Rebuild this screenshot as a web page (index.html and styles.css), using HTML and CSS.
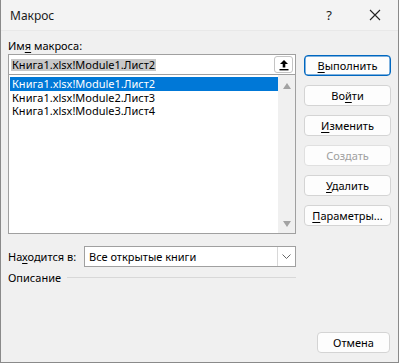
FILE: index.html
```html
<!DOCTYPE html>
<html lang="ru">
<head>
    <meta charset="UTF-8">
    <title>Макрос</title>
    <link rel="stylesheet" href="styles.css">
</head>
<body>
<div class="window">
    <div class="titlebar">
        <span class="title">Макрос</span>
        <span class="help">?</span>
        <span class="close">
            <svg width="12" height="12" viewBox="0 0 12 12"><path d="M1 1 L11 11 M11 1 L1 11" stroke="#222" stroke-width="1.1" fill="none"/></svg>
        </span>
    </div>
    <div class="body">
        <div class="main">
            <div class="left">
                <div class="label">Им<u>я</u> макроса:</div>
                <div class="name-box">
                    <span class="name-sel">Книга1.xlsx!Module1.Лист2</span>
                    <span class="pick">
                        <svg width="10" height="12" viewBox="0 0 10 12"><path d="M5 1 L9 5 H6.3 V8.5 H3.7 V5 H1 Z" fill="#000"/><rect x="0.5" y="10" width="9" height="1.4" fill="#000"/></svg>
                    </span>
                </div>
                <div class="list">
                    <div class="rows">
                        <div class="row selected">Книга1.xlsx!Module1.Лист2</div>
                        <div class="row">Книга1.xlsx!Module2.Лист3</div>
                        <div class="row">Книга1.xlsx!Module3.Лист4</div>
                    </div>
                    <div class="scroll">
                        <svg width="8" height="6" viewBox="0 0 8 6"><path d="M0 6 L4 0 L8 6 Z" fill="#a3a3a3"/></svg>
                        <svg width="8" height="6" viewBox="0 0 8 6"><path d="M0 0 L4 6 L8 0 Z" fill="#a3a3a3"/></svg>
                    </div>
                </div>
            </div>
            <div class="buttons">
                <button class="btn default"><u>В</u>ыполнить</button>
                <button class="btn">Во<u>й</u>ти</button>
                <button class="btn"><u>И</u>зменить</button>
                <button class="btn disabled">Создать</button>
                <button class="btn"><u>У</u>далить</button>
                <button class="btn"><u>П</u>араметры...</button>
            </div>
        </div>
        <div class="where">
            <span class="where-label">На<u>х</u>одится в:</span>
            <div class="select">
                <span class="select-value">Все открытые книги</span>
                <span class="select-arrow">
                    <svg width="9" height="5" viewBox="0 0 9 5"><path d="M0.5 0.5 L4.5 4.5 L8.5 0.5" stroke="#666" stroke-width="1" fill="none"/></svg>
                </span>
            </div>
        </div>
        <div class="desc">
            <span>Описание</span>
            <span class="desc-line"></span>
        </div>
        <div class="footer">
            <button class="btn cancel">Отмена</button>
        </div>
    </div>
</div>
</body>
</html>
```

FILE: styles.css
```css
html, body {
    margin: 0;
    padding: 0;
}
body {
    font-family: 'Noto Sans', Arial, sans-serif;
    font-size: 11px;
    color: #000;
    background: #f0f0f0;
}
.window {
    width: 397px;
    height: 362px;
    border-left: 1px solid #8a8a8a;
    border-right: 1px solid #8a8a8a;
    border-bottom: 1px solid #8a8a8a;
    background: #f0f0f0;
    display: flex;
    flex-direction: column;
}
.titlebar {
    height: 30px;
    display: flex;
    align-items: center;
    background: #f3f3f3;
    border-bottom: 1px solid #e8e8e8;
}
.title {
    font-size: 12px;
    padding-left: 9px;
    flex: 1;
    color: #1a1a1a;
}
.help {
    font-size: 13px;
    width: 46px;
    text-align: center;
    color: #1a1a1a;
}
.close {
    width: 46px;
    display: flex;
    justify-content: center;
}
.body {
    flex: 1;
    padding: 0 7px 0 7px;
    display: flex;
    flex-direction: column;
}
.main {
    display: flex;
    gap: 8px;
}
.left {
    width: 288px;
}
.label {
    height: 15px;
    padding-top: 7px;
    line-height: 15px;
}
u {
    text-decoration-thickness: 1px;
    text-underline-offset: 2px;
}
.name-box {
    height: 19px;
    background: #fff;
    border: 1px solid #a0a0a0;
    border-bottom: none;
    display: flex;
    align-items: center;
    padding-left: 2px;
    padding-right: 2px;
    margin-top: 1px;
}
.name-sel {
    background: #c8c8c8;
    line-height: 12px;
    padding: 0 1px;
    flex: none;
}
.pick {
    margin-left: auto;
    width: 19px;
    height: 17px;
    border: 1px solid #c4c4c4;
    border-radius: 3px;
    display: flex;
    align-items: center;
    justify-content: center;
    box-sizing: border-box;
}
.list {
    background: #fff;
    border: 1px solid #a0a0a0;
    display: flex;
    padding: 2px 0 2px 1px;
    box-sizing: border-box;
    height: 160px;
}
.rows {
    flex: 1;
}
.row {
    height: 13.5px;
    line-height: 13.5px;
    padding-left: 2px;
    white-space: nowrap;
}
.row.selected {
    background: #0078d7;
    color: #fff;
}
.scroll {
    width: 17px;
    margin-top: -2px;
    margin-bottom: -2px;
    background: #f0f0f0;
    display: flex;
    flex-direction: column;
    justify-content: space-between;
    align-items: center;
    padding: 8px 0 6px;
}
.buttons {
    width: 87px;
    display: flex;
    flex-direction: column;
    gap: 9px;
    padding-top: 24px;
}
.btn {
    font-family: 'Noto Sans', Arial, sans-serif;
    font-size: 11px;
    height: 21px;
    padding: 0;
    background: #fdfdfd;
    border: 1px solid #d4d4d4;
    border-radius: 4px;
    color: #000;
}
.btn.default {
    border: 1px solid #0067c0;
    box-shadow: inset 0 0 0 0.5px #0067c0;
}
.btn.disabled {
    color: #a0a0a0;
    border-color: #e0e0e0;
}
.where {
    display: flex;
    align-items: center;
    margin-top: 12px;
}
.where-label {
    width: 76px;
}
.select {
    width: 212px;
    height: 21px;
    box-sizing: border-box;
    background: #fff;
    border: 1px solid #a0a0a0;
    display: flex;
    align-items: center;
}
.select-value {
    flex: 1;
    padding-left: 4px;
}
.select-arrow {
    width: 17px;
    height: 19px;
    border-left: 1px solid #d8d8d8;
    display: flex;
    align-items: center;
    justify-content: center;
}
.desc {
    display: flex;
    align-items: center;
    gap: 6px;
    margin-top: 2px;
    width: 288px;
    height: 16px;
}
.desc-line {
    flex: 1;
    height: 1px;
    background: #d8d8d8;
}
.footer {
    margin-top: auto;
    display: flex;
    justify-content: flex-end;
    padding: 0 1px 9px 0;
}
.btn.cancel {
    width: 73px;
}
```
